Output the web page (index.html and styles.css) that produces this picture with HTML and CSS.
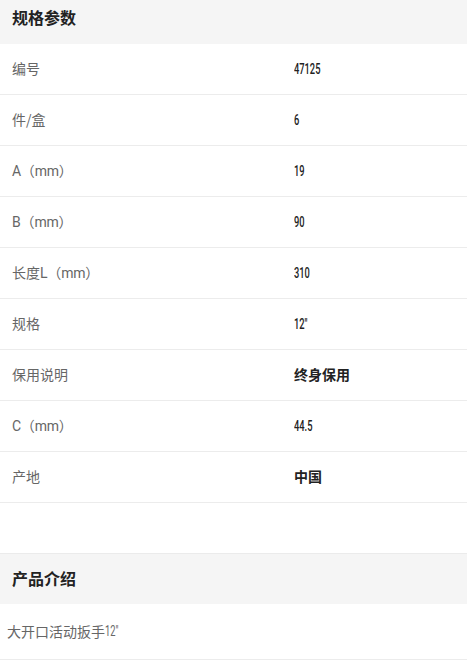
FILE: index.html
```html
<!DOCTYPE html>
<html lang="zh">
<head>
<meta charset="utf-8">
<link rel="stylesheet" href="styles.css">
</head>
<body>
<div class="page">
  <section class="block">
    <h2 class="block-title">规格参数</h2>
    <div class="spec">
      <div class="row"><span class="label">编号</span><span class="value"><span class="num">47125</span></span></div>
      <div class="row"><span class="label">件/盒</span><span class="value"><span class="num">6</span></span></div>
      <div class="row"><span class="label"><span class="lat">A</span>（<span class="lat">mm</span>）</span><span class="value"><span class="num">19</span></span></div>
      <div class="row"><span class="label"><span class="lat">B</span>（<span class="lat">mm</span>）</span><span class="value"><span class="num">90</span></span></div>
      <div class="row"><span class="label">长度<span class="lat">L</span>（<span class="lat">mm</span>）</span><span class="value"><span class="num">310</span></span></div>
      <div class="row"><span class="label">规格</span><span class="value"><span class="num">12"</span></span></div>
      <div class="row"><span class="label">保用说明</span><span class="value strong">终身保用</span></div>
      <div class="row"><span class="label"><span class="lat">C</span>（<span class="lat">mm</span>）</span><span class="value"><span class="num">44.5</span></span></div>
      <div class="row"><span class="label">产地</span><span class="value strong">中国</span></div>
    </div>
  </section>
  <section class="block block-intro">
    <h2 class="block-title">产品介绍</h2>
    <div class="intro">大开口活动扳手<span class="num">12"</span></div>
  </section>
</div>
</body>
</html>
```
FILE: styles.css
```css
* { box-sizing: border-box; }
html, body { margin: 0; padding: 0; background: #fff; }
body {
  font-family: "Noto Sans CJK SC", sans-serif;
  font-size: 14px;
  color: #333;
}
.page { margin-top: -7px; overflow: hidden; }
.block-title {
  margin: 0;
  height: 51px;
  display: flex;
  align-items: center;
  padding: 0 12px 3px;
  background: #f5f5f5;
  border-top: 1px solid #ebebeb;
  font-size: 16px;
  font-weight: 700;
  color: #222;
}
.block:first-child .block-title { border-top: none; }
.spec { display: flex; flex-direction: column; }
.row {
  display: grid;
  grid-template-columns: 282px 1fr;
  height: 51px;
  align-items: center;
  padding-bottom: 3px;
  border-bottom: 1px solid #ececec;
}
.label {
  padding-left: 12px;
  color: #666;
}
.lat {
  font-family: Roboto, sans-serif;
  letter-spacing: -0.3px;
}
.value {
  padding-left: 12px;
  color: #222;
}
.num {
  display: inline-block;
  font-family: Roboto, sans-serif;
  font-size: 15px;
  font-weight: 500;
  transform: scaleX(0.62);
  transform-origin: left center;
}
.value.strong {
  font-weight: 700;
}
.block-intro { margin-top: 50px; }
.intro {
  height: 56px;
  display: flex;
  align-items: center;
  padding: 0 0 2px 7px;
  color: #666;
  border-bottom: 1px solid #ececec;
}
.intro .num { font-weight: 400; }
```
